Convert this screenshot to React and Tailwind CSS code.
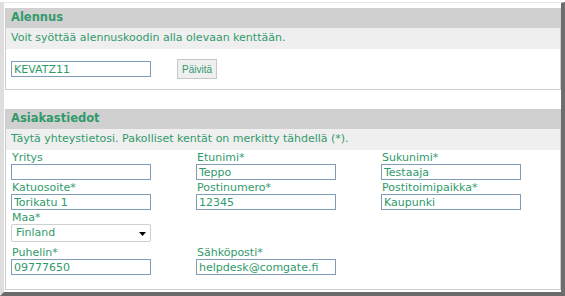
import React from "react";

const inputCls =
  "block w-[140px] h-[16px] border border-[#7f9db9] bg-white px-[2px] text-[11px] leading-[14px] text-[#2f9a6a] outline-none font-['DejaVu_Sans',Verdana,sans-serif]";

const Field = ({ label, value }) => (
  <div className="flex flex-col">
    <label className="h-[14px] leading-[15px] pl-px">{label}</label>
    <input className={inputCls} value={value} readOnly />
  </div>
);

const Header = ({ title, text }) => (
  <>
    <div className="h-[20px] bg-[#d0d0d0] pl-[5px] flex items-center font-bold text-[11.5px]">{title}</div>
    <div className="h-[21px] bg-[#efefef] pl-[5px] flex items-center">{text}</div>
  </>
);

export default function App() {
  return (
    <div className="w-[565px] h-[296px] bg-white pt-[2px] font-['DejaVu_Sans',Verdana,sans-serif] text-[11px] text-[#319a6b]">
      <div className="h-[294px] border-t border-t-[#e6e6e6] border-l-4 border-l-[#dedede] border-r-4 border-r-[#6e6e6e] border-b-4 border-b-[#6a6a6a] pl-px pt-[5px]">
        {/* Alennus */}
        <div className="w-[556px] border-x border-b border-[#cccccc]">
          <Header title="Alennus" text="Voit syöttää alennuskoodin alla olevaan kenttään." />
          <div className="h-[40px] bg-white pl-[5px] flex items-center gap-[26px]">
            <input className={inputCls} value="KEVATZ11" readOnly />
            <button className="w-[40px] h-[20px] bg-[#efefef] border border-[#c8c8c8] text-[10px] font-['Liberation_Sans',Arial,sans-serif] text-[#319a6b]">
              Päivitä
            </button>
          </div>
        </div>

        {/* Asiakastiedot */}
        <div className="w-[556px] mt-[19px] border-x border-b border-[#cccccc]">
          <Header title="Asiakastiedot" text="Täytä yhteystietosi. Pakolliset kentät on merkitty tähdellä (*)." />
          <div className="bg-white pl-[5px] pb-[14px]">
            <div className="grid grid-cols-[185px_185px_185px]">
              <Field label="Yritys" value="" />
              <Field label="Etunimi*" value="Teppo" />
              <Field label="Sukunimi*" value="Testaaja" />
              <Field label="Katuosoite*" value="Torikatu 1" />
              <Field label="Postinumero*" value="12345" />
              <Field label="Postitoimipaikka*" value="Kaupunki" />
            </div>
            <div className="flex flex-col">
              <span className="h-[14px] leading-[15px] pl-px">Maa*</span>
              <div className="w-[140px] h-[18px] border border-[#cfcfcf] rounded-[2px] bg-white flex items-center justify-between pl-[4px] pr-[4px]">
                <span className="text-[11px]">Finland</span>
                <svg width="7" height="4" viewBox="0 0 7 4" className="mt-px">
                  <path d="M0 0H7L3.5 4Z" fill="#000" />
                </svg>
              </div>
            </div>
            <div className="grid grid-cols-[185px_185px_185px] mt-[3px]">
              <Field label="Puhelin*" value="09777650" />
              <Field label="Sähköposti*" value="helpdesk@comgate.fi" />
            </div>
          </div>
        </div>
      </div>
    </div>
  );
}
